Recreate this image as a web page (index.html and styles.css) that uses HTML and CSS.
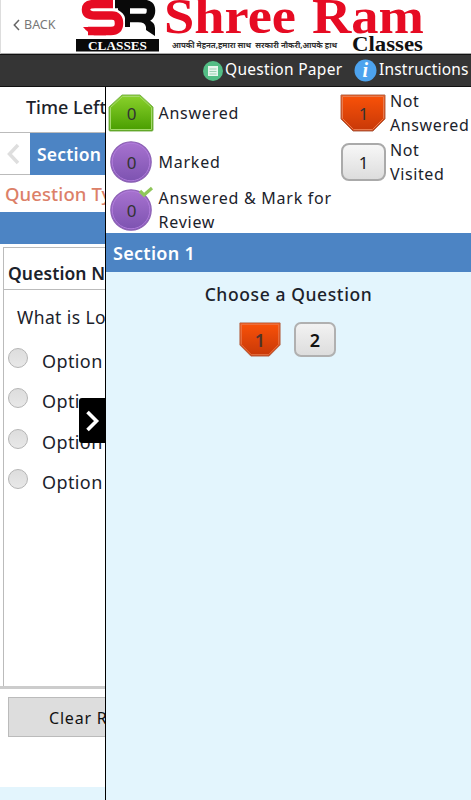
FILE: index.html
```html
<!DOCTYPE html>
<html lang="en">
<head>
<meta charset="utf-8">
<title>Shree Ram Classes</title>
<link rel="stylesheet" href="styles.css">
</head>
<body>
<svg class="defs" width="0" height="0" aria-hidden="true">
  <defs>
    <linearGradient id="green" x1="0" y1="0" x2="0" y2="1"><stop offset="0" stop-color="#8bd22c"/><stop offset="1" stop-color="#489d00"/></linearGradient>
    <linearGradient id="red" x1="0" y1="0" x2="0" y2="1"><stop offset="0" stop-color="#fa5208"/><stop offset="1" stop-color="#c73808"/></linearGradient>
    <linearGradient id="purple" x1="0" y1="0" x2="0" y2="1"><stop offset="0" stop-color="#a873d0"/><stop offset="1" stop-color="#7c52b0"/></linearGradient>
    <symbol id="answered" viewBox="0 0 46 38"><path d="M1 36V13L14 1H32L45 13V36Q45 37 44 37H2Q1 37 1 36Z" fill="url(#green)" stroke="#7db352"/><path d="M2.5 35.5V13.5L14.5 2.5H31.5L43.5 13.5V35.5Z" fill="none" stroke="#a5d96c"/></symbol>
    <symbol id="unanswered" viewBox="0 0 46 38"><path d="M1 1H45V25L33 37H13L1 25Z" fill="url(#red)" stroke="#b0664c"/><path d="M2.5 2.5H43.5V24.5L32.500 35.500H13.500L2.500 24.500Z" fill="none" stroke="#ea7a4c"/></symbol>
    <symbol id="marked" viewBox="0 0 42 42"><circle cx="21" cy="21" r="20.200" fill="url(#purple)" stroke="#8d62b5" stroke-width="1.200"/><circle cx="21" cy="21" r="18.800" fill="none" stroke="#b07cdb"/></symbol>
  </defs>
</svg>
<header class="header">
  <a class="back"><svg width="7" height="12" viewBox="0 0 7 12"><path d="M6 1L1.300 6L6 11" fill="none" stroke="#666" stroke-width="1.500"/></svg><span>BACK</span></a>
  <svg class="logo" width="350" height="53" viewBox="0 0 350 53">
    <path d="M37 4H19Q10 4 10 9.500Q10 15.500 19 15.500H36Q43 15.500 43 23.500Q43 31 35 31H12" fill="none" stroke="#e60b23" stroke-width="8.500"/>
    <path d="M7 27H30V35.250H18Q12 33 7 27Z" fill="#e60b23"/>
    <path d="M39 4H68Q75 4 75 10.500Q75 18 68 18H54" fill="none" stroke="#090909" stroke-width="8.500"/>
    <path d="M42 7H54V27H49V18Q48 13 42 10ZM62 20H72Q79 22 79 28V36L70 30V27Q69 22 62 22Z" fill="#090909"/>
    <rect y="39" width="83" height="12.500" fill="#090909"/>
    <text class="logo-tag" x="12" y="49.500" textLength="59" lengthAdjust="spacingAndGlyphs">CLASSES</text>
    <text class="logo-name" x="88" y="33" textLength="132" lengthAdjust="spacingAndGlyphs">Shree</text>
    <text class="logo-name" x="236" y="33" textLength="112" lengthAdjust="spacingAndGlyphs">Ram</text>
    <text class="logo-motto" x="96" y="48" textLength="165" lengthAdjust="spacingAndGlyphs">आपकी मेहनत,हमारा साथ &#160;सरकारी नौकरी,आपके हाथ</text>
    <text class="logo-classes" x="276" y="51" textLength="71" lengthAdjust="spacingAndGlyphs">Classes</text>
  </svg>
</header>
<nav class="toolbar">
  <a class="tool paper"><svg width="20" height="20" viewBox="0 0 20 20"><circle cx="10" cy="10" r="10" fill="#53bd85"/><path d="M5 5H15V15H5Z" fill="#e7f6ed"/><path d="M6.500 8H13.500M6.500 10.500H13.500M6.500 13H13.500" stroke="#9bcfb2"/></svg><span>Question Paper</span></a>
  <a class="tool info"><svg width="23" height="23" viewBox="0 0 23 23"><circle cx="11.500" cy="11.500" r="11" fill="#4da3ee"/><text class="info-letter" x="11.500" y="18" text-anchor="middle">i</text></svg><span>Instructions</span></a>
</nav>
<main class="exam">
  <section class="question-pane">
    <div class="time">Time Left</div>
    <div class="tabs"><span class="prev"><svg width="13" height="22" viewBox="0 0 13 22"><path d="M11 2L2.500 11L11 20" fill="none" stroke="#dedede" stroke-width="3.500"/></svg></span><b class="tab">Section</b></div>
    <div class="type">Question Type</div>
    <div class="strip"></div>
    <div class="card">
      <h2 class="number">Question No</h2>
      <p class="question">What is Lo</p>
      <label class="option"><i class="radio"></i><span>Option</span></label>
      <label class="option"><i class="radio"></i><span>Option</span></label>
      <label class="option"><i class="radio"></i><span>Option</span></label>
      <label class="option"><i class="radio"></i><span>Option</span></label>
    </div>
    <div class="actions"><div class="clear">Clear Response</div></div>
  </section>
  <aside class="panel">
    <div class="legend">
      <div class="badge"><svg width="46" height="38"><use href="#answered"/></svg><em>0</em></div><p class="answered">Answered</p>
      <div class="badge"><svg width="46" height="38"><use href="#unanswered"/></svg><em>1</em></div><p class="narrow">Not<br>Answered</p>
      <div class="badge"><svg width="42" height="42"><use href="#marked"/></svg><em>0</em></div><p class="marked">Marked</p>
      <div class="badge"><span class="box"></span><em class="dark">1</em></div><p class="narrow">Not<br>Visited</p>
      <div class="badge"><svg width="42" height="42"><use href="#marked"/></svg><svg class="tick" width="16" height="12" viewBox="0 0 16 12"><path d="M2 5L6 9L14 2" fill="none" stroke="#8fc65a" stroke-width="3.200"/></svg><em>0</em></div><p class="review">Answered &amp; Mark for<br>Review</p>
    </div>
    <h2 class="section">Section 1</h2>
    <h3 class="choose">Choose a Question</h3>
    <div class="choices"><div class="choice"><svg width="42" height="35" viewBox="0 0 46 38" preserveAspectRatio="none"><path d="M1 1H45V25L33 37H13L1 25Z" fill="url(#red)" stroke="#b0664c"/><path d="M2.500 2.500H43.500V24.500L32.500 35.500H13.500L2.500 24.500Z" fill="none" stroke="#ea7a4c"/></svg><em>1</em></div><div class="choice two">2</div></div>
    <div class="toggle"><svg width="15" height="22" viewBox="0 0 15 22"><path d="M2.500 2L11.500 11L2.500 20" fill="none" stroke="#fff" stroke-width="3.600"/></svg></div>
  </aside>
</main>
</body>
</html>
```
FILE: styles.css
```css
* { box-sizing: border-box; }
body { margin: 0; width: 471px; height: 800px; overflow: hidden; font: 17px/24px "Noto Sans", sans-serif; color: #1b222b; background: #fff; }
h2, h3, p { margin: 0; }
em { font-style: normal; }
.defs { position: absolute; }
.header { height: 54px; display: flex; border-bottom: 1px solid #aaa; border-left: 1px solid #ddd; }
.back { width: 75px; padding: 1px 0 0 12px; display: flex; align-items: center; gap: 4px; height: 49px; font-size: 12.5px; color: #777; }
.logo-tag { font: bold 13px "Liberation Serif", serif; fill: #fff; }
.logo-name { font: bold 51px "Liberation Serif", serif; fill: #e60b23; }
.logo-motto { font: bold 8px "Noto Sans", sans-serif; fill: #333; }
.logo-classes { font: bold 20px "Liberation Serif", serif; fill: #111; }
.toolbar { height: 33px; background: #353535; border-top: 1px solid #111; border-bottom: 1px solid #111; color: #fff; display: flex; justify-content: flex-end; align-items: center; font-size: 15.5px; letter-spacing: .3px; padding-right: 3px; gap: 12px; }
.tool { display: flex; align-items: center; gap: 2px; white-space: nowrap; }
.tool span { margin-top: -3px; }
.paper span { width: 117px; }
.info span { width: 89px; letter-spacing: .2px; }
.info-letter { font: italic bold 20px "Liberation Serif", serif; fill: #fff; }
.exam { position: relative; height: 713px; background: #e3f5fd; }
.question-pane { width: 106px; height: 700px; overflow: hidden; background: #fff; white-space: nowrap; }
.time { height: 45px; padding: 8px 0 0 26px; font-size: 18px; font-weight: 500; }
.tabs { display: flex; height: 43px; border-top: 1px solid #bbb; }
.prev { flex: none; width: 30px; border-bottom: 1px solid #bbb; display: flex; align-items: center; padding-left: 7px; }
.tab { flex: none; width: 100px; background: #4c84c4; color: #fff; padding: 9px 7px; font-size: 17.500px; font-weight: 600; letter-spacing: .2px; }
.type { height: 37px; padding: 7px 0 0 5px; font-size: 18.500px; font-weight: 500; letter-spacing: .1px; color: #dc8068; }
.strip { height: 32px; background: #4c84c4; margin-bottom: 3px; }
.card { margin-left: 3px; height: 439px; border: 1px solid #bbb; border-bottom: 0; }
.number { height: 42px; border-bottom: 1px solid #bbb; padding: 13px 0 0 4px; font-size: 17.500px; font-weight: 600; letter-spacing: .1px; }
.question { height: 50px; padding: 15px 0 0 13px; font-size: 17.500px; letter-spacing: .4px; }
.option { height: 40.500px; display: flex; align-items: center; gap: 14px; padding-left: 4px; font-size: 18px; letter-spacing: .4px; }
.option span { margin-top: 1px; }
.radio { flex: none; width: 20px; height: 20px; margin-top: -5px; border: 1px solid #b5b5b5; border-radius: 50%; background: linear-gradient(#ddd, #e8e8e8); }
.actions { border-top: 3px solid #ccc; padding: 8px 0 0 8px; }
.clear { width: 160px; height: 40px; background: #ddd; border: 1px solid #bbb; padding: 8px 0 0 40px; font-size: 16px; letter-spacing: .8px; color: #111; }
.panel { position: absolute; top: 0; right: 0; width: 366px; height: 713px; border-left: 1px solid #000; background: #e3f5fd; }
.legend { display: grid; grid-template-columns: 51.500px 180.500px 51px 81px; grid-template-rows: 49px 48px 49px; height: 146px; padding-left: 1px; background: #fff; font-size: 16px; letter-spacing: .75px; }
.legend p { white-space: nowrap; padding-top: 2px; }
.legend .answered, .legend .marked { padding-top: 13.500px; }
.legend .narrow { letter-spacing: .6px; }
.legend .review { padding-top: 2px; margin-top: 0; }
.badge { position: relative; width: 48px; height: 48px; display: flex; align-items: center; justify-content: center; padding-top: 3px; }
.badge em { position: absolute; left: 1px; right: 0; top: 15px; text-align: center; color: #333; font-size: 17px; letter-spacing: 0; }
.badge .dark { color: #222; }
.box { width: 45px; height: 38px; border: 2px solid #aaa; border-radius: 8px; background: linear-gradient(#f7f7f7, #ddd); }
.tick { position: absolute; right: 1px; top: 2px; }
.section { height: 39px; padding: 8px 7px; background: #4c84c4; color: #fff; font-size: 18px; font-weight: 600; letter-spacing: .3px; }
.choose { text-align: center; padding-top: 10px; font-size: 17.500px; font-weight: 500; letter-spacing: .6px; }
.choices { display: flex; justify-content: center; gap: 13px; padding: 16px 0 0; margin-right: 2px; }
.choice { position: relative; width: 42px; height: 35px; font-size: 18px; font-weight: 600; text-align: center; }
.choice em { position: absolute; inset: 6px 0 0; color: #51332a; }
.two { border: 2px solid #b0b0b0; border-radius: 7px; background: linear-gradient(#f2f2f2, #ddd); padding-top: 4px; color: #111; }
.toggle { position: absolute; left: -27px; top: 311px; width: 26px; height: 45px; background: #000; display: flex; align-items: center; justify-content: center; border-radius: 3px 0 0 3px; }
```
